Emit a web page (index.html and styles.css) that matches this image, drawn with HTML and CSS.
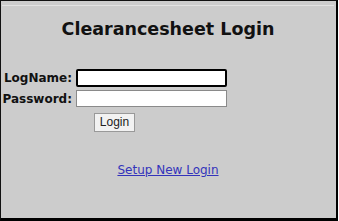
FILE: index.html
```html
<!DOCTYPE html>
<html lang="en">
<head>
    <meta charset="UTF-8">
    <meta name="viewport" content="width=device-width, initial-scale=1.0">
    <title>Clearancesheet Login</title>
    <link rel="stylesheet" href="styles.css">
</head>
<body>
    <div class="frame">
        <div class="inner">
            <h1>Clearancesheet Login</h1>

            <form class="login-form" onsubmit="return false;">
                <label for="logname">LogName:</label>
                <input type="text" id="logname" class="field focused">
                <label for="password">Password:</label>
                <input type="password" id="password" class="field">
                <div class="actions">
                    <button type="submit">Login</button>
                </div>
            </form>

            <div class="setup">
                <a href="#">Setup New Login</a>
            </div>
        </div>
    </div>
</body>
</html>
```

FILE: styles.css
```css
html, body {
    margin: 0;
    padding: 0;
    background: #fff;
}
body {
    width: 339px;
    height: 221px;
    font-family: "DejaVu Sans", Verdana, sans-serif;
}
.frame {
    box-sizing: border-box;
    width: 338px;
    height: 221px;
    background: #cccccc;
    border-top: 1px solid #111;
    border-left: 1px solid #111;
    border-right: 2px solid #000;
    border-bottom: 3px solid #000;
    padding: 4px 2px 0 1px;
}
.inner {
    border-top: 1px solid #e2e2e2;
}
h1 {
    margin: 0;
    padding-top: 13px;
    text-align: center;
    font-size: 17.5px;
    font-weight: bold;
    color: #111;
}
.login-form {
    display: grid;
    grid-template-columns: 70px 151px;
    column-gap: 4px;
    row-gap: 3px;
    align-items: center;
    width: 225px;
    margin-top: 30px;
}
.login-form label {
    text-align: right;
    font-size: 12px;
    font-weight: bold;
    color: #111;
}
.field {
    box-sizing: border-box;
    width: 151px;
    height: 17px;
    margin: 0;
    padding: 0 3px;
    border: 1px solid #8a8a8a;
    background: #fff;
    outline: none;
}
.field.focused {
    height: 18px;
    border: 2px solid #000;
    border-radius: 2px;
}
.actions {
    grid-column: 1 / 3;
    text-align: center;
    padding-top: 1px;
}
.actions button {
    box-sizing: border-box;
    width: 41px;
    height: 19px;
    margin: 0;
    padding: 0;
    font-family: "Liberation Sans", Arial, sans-serif;
    font-size: 12px;
    color: #222;
    background: #f2f2f2;
    border: 1px solid #999;
    border-radius: 0;
}
.setup {
    margin-top: 31px;
    text-align: center;
    font-size: 12px;
}
.setup a {
    color: #3333bb;
}
```
